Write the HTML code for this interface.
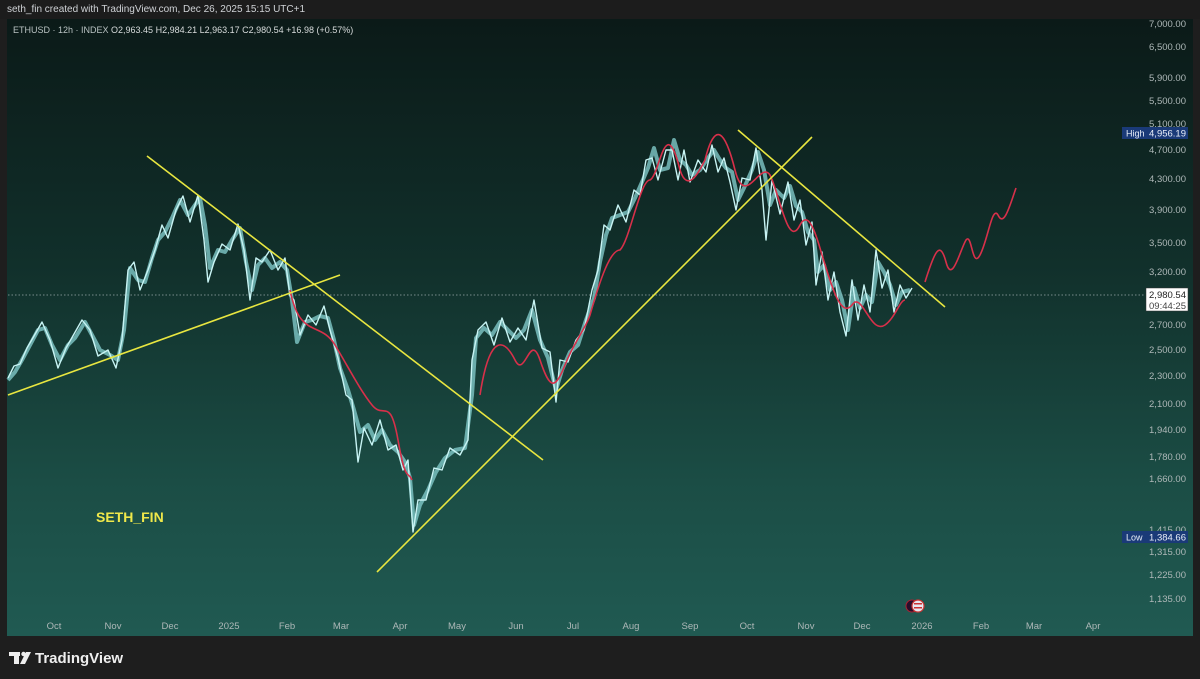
<!DOCTYPE html>
<html><head><meta charset="utf-8"><style>
html,body{margin:0;padding:0;width:1200px;height:679px;overflow:hidden;background:#1e1e1e;font-family:"Liberation Sans",sans-serif}
#top{position:absolute;left:0;top:0;width:1200px;height:19px;background:#1c1c1c;color:#cfd2d6;font-size:10px;line-height:19px;padding-left:7px;box-sizing:border-box}
#chart{position:absolute;left:7px;top:19px;width:1186px;height:617px;background:linear-gradient(#0b1a18 0%,#11302b 40%,#1b4d45 75%,#205a52 100%)}
svg{position:absolute;left:0;top:0}
.ax{fill:#aeb8b8;font-size:9.5px;font-family:"Liberation Sans",sans-serif}
.tm{fill:#aeb8b8;font-size:9.5px;font-family:"Liberation Sans",sans-serif;text-anchor:middle}
</style></head><body>
<div id="top">seth_fin created with TradingView.com, Dec 26, 2025 15:15 UTC+1</div>
<div id="chart"></div>
<svg width="1200" height="679" viewBox="0 0 1200 679">
<text x="13" y="33" font-size="9" fill="#b9c2c2">ETHUSD · 12h · INDEX  <tspan fill="#d8dcdc">O2,963.45  H2,984.21  L2,963.17  C2,980.54  +16.98 (+0.57%)</tspan></text>
<line x1="8" y1="295" x2="1145" y2="295" stroke="#9aa" stroke-width="0.8" stroke-dasharray="1.5,2"/>
<g fill="none" stroke-linejoin="round">
<polyline stroke="#7fc8c8" stroke-width="4" opacity="0.8" points="8,380 15,372 22,360 30,345 38,330 45,328 52,345 60,360 68,345 75,338 85,322 92,335 100,350 110,355 118,360 124,330 130,268 138,280 145,282 152,258 158,240 165,232 172,218 180,200 188,215 195,205 200,198 205,225 210,268 218,250 225,252 232,240 240,228 246,262 252,290 258,265 265,258 272,268 280,262 287,270 292,300 297,342 305,322 312,320 320,316 328,318 334,340 340,368 348,390 354,410 360,432 368,425 375,440 382,430 390,445 398,452 405,462 410,478 414,525 420,505 428,490 436,472 445,458 455,450 465,448 472,395 476,338 484,328 492,335 500,322 508,330 516,338 524,330 532,310 540,340 548,358 556,390 562,370 570,352 578,345 586,320 594,298 600,262 606,235 612,218 620,215 628,212 635,198 642,182 648,168 654,148 660,170 668,168 674,140 680,160 686,165 692,175 700,170 708,158 714,150 720,160 726,168 732,172 738,200 744,188 752,170 758,152 764,170 770,205 776,190 784,198 790,186 796,206 802,212 808,232 814,240 818,272 824,265 830,290 836,282 842,300 848,330 854,288 860,308 866,295 872,302 878,262 884,272 890,285 896,305 902,292 910,290"/>
<polyline stroke="#c8f4f4" stroke-width="1.4" points="8,378 14,366 20,364 27,348 34,336 42,322 50,340 58,368 66,348 74,334 82,320 90,330 98,356 108,350 116,368 122,340 128,270 134,262 140,290 148,270 155,250 162,225 168,238 176,210 183,196 190,222 198,195 204,240 208,282 214,262 222,244 230,250 238,224 244,250 250,300 256,258 262,262 270,250 278,270 285,258 290,296 294,300 300,335 308,315 316,325 324,306 330,330 338,358 346,395 352,400 358,462 364,428 372,445 380,420 388,450 396,445 403,470 408,460 413,532 418,500 426,500 434,468 442,470 450,448 460,455 468,440 472,360 478,330 486,322 494,345 502,318 510,342 518,328 526,340 534,300 542,348 550,352 556,402 560,360 568,362 576,340 584,330 592,290 598,270 604,225 610,230 618,205 626,222 634,190 640,195 646,160 652,158 658,180 666,150 672,150 678,180 684,150 690,182 698,160 706,172 712,145 718,172 724,158 730,182 736,210 742,178 750,180 756,148 762,190 766,240 772,180 780,214 788,182 794,220 800,200 806,245 812,222 816,285 822,252 828,300 834,272 840,312 846,336 852,280 858,320 864,285 870,312 876,250 882,288 888,270 894,312 900,285 906,298 912,288"/>
<path stroke="#d8304a" stroke-width="1.6" d="M290,290 C300,340 320,320 335,345 S360,390 372,405 S390,395 398,440 S408,470 412,480"/>
<path stroke="#d8304a" stroke-width="1.6" d="M480,395 C490,330 505,340 515,360 S530,330 540,360 S555,390 565,365 S585,330 590,315 C600,280 610,250 620,250 C630,240 640,180 650,180 C660,175 665,110 680,170 C688,195 700,170 705,160 C715,120 725,130 735,170 C745,210 760,160 770,175 C780,195 788,250 800,225 C808,210 815,230 822,255 C830,280 840,320 852,305 C862,290 870,335 885,325 C895,318 900,300 905,300"/>
<path stroke="#d8304a" stroke-width="1.6" d="M925,282 C935,250 940,240 946,262 C952,285 960,250 966,240 C972,232 972,270 980,255 C988,240 992,205 998,215 C1004,228 1010,205 1016,188"/>
</g>
<g stroke="#e8e640" stroke-width="1.6">
<line x1="8" y1="395" x2="340" y2="275"/>
<line x1="147" y1="156" x2="543" y2="460"/>
<line x1="377" y1="572" x2="812" y2="137"/>
<line x1="738" y1="130" x2="945" y2="307"/>
</g>
<text x="96" y="522" font-size="14" font-weight="bold" fill="#efe84a">SETH_FIN</text>
<g class="ax" text-anchor="end">
<text x="1186" y="27">7,000.00</text><text x="1186" y="50">6,500.00</text><text x="1186" y="81">5,900.00</text><text x="1186" y="104">5,500.00</text><text x="1186" y="127">5,100.00</text><text x="1186" y="153">4,700.00</text><text x="1186" y="182">4,300.00</text><text x="1186" y="213">3,900.00</text><text x="1186" y="246">3,500.00</text><text x="1186" y="275">3,200.00</text><text x="1186" y="328">2,700.00</text><text x="1186" y="353">2,500.00</text><text x="1186" y="379">2,300.00</text><text x="1186" y="407">2,100.00</text><text x="1186" y="433">1,940.00</text><text x="1186" y="460">1,780.00</text><text x="1186" y="482">1,660.00</text><text x="1186" y="533">1,415.00</text><text x="1186" y="555">1,315.00</text><text x="1186" y="578">1,225.00</text><text x="1186" y="602">1,135.00</text>
</g>
<rect x="1122" y="127" width="66" height="12" fill="#1a3a78"/>
<text x="1126" y="136.5" font-size="9" fill="#e8eef8">High</text><text x="1186" y="136.5" font-size="9.5" fill="#e8eef8" text-anchor="end">4,956.19</text>
<rect x="1122" y="531" width="66" height="12" fill="#1a3a78"/>
<text x="1126" y="540.5" font-size="9" fill="#e8eef8">Low</text><text x="1186" y="540.5" font-size="9.5" fill="#e8eef8" text-anchor="end">1,384.66</text>
<rect x="1146" y="288" width="42" height="23" fill="#fff" stroke="#333" stroke-width="0.5"/>
<text x="1186" y="298" font-size="9.5" fill="#222" text-anchor="end">2,980.54</text>
<text x="1186" y="309" font-size="9.5" fill="#444" text-anchor="end">09:44:25</text>
<circle cx="912" cy="606" r="6" fill="#2a0d2a" stroke="#a23" stroke-width="1"/>
<circle cx="918" cy="606" r="6" fill="#e6e6f0" stroke="#c33" stroke-width="1.2"/>
<rect x="914" y="603" width="8" height="1.5" fill="#c33"/><rect x="914" y="607" width="8" height="1.5" fill="#c33"/>
<g class="tm">
<text x="54" y="629">Oct</text><text x="113" y="629">Nov</text><text x="170" y="629">Dec</text><text x="229" y="629">2025</text><text x="287" y="629">Feb</text><text x="341" y="629">Mar</text><text x="400" y="629">Apr</text><text x="457" y="629">May</text><text x="516" y="629">Jun</text><text x="573" y="629">Jul</text><text x="631" y="629">Aug</text><text x="690" y="629">Sep</text><text x="747" y="629">Oct</text><text x="806" y="629">Nov</text><text x="862" y="629">Dec</text><text x="922" y="629">2026</text><text x="981" y="629">Feb</text><text x="1034" y="629">Mar</text><text x="1093" y="629">Apr</text>
</g>
<g fill="#eeeeee">
<rect x="9" y="652" width="11" height="4"/><rect x="14" y="652" width="5" height="12"/>
<circle cx="23.5" cy="654" r="2.2"/>
<polygon points="26,652 31,652 25,664 20,664"/>
</g>
<text x="35" y="663" font-size="15" font-weight="bold" fill="#eeeeee">TradingView</text>
</svg>
</body></html>
